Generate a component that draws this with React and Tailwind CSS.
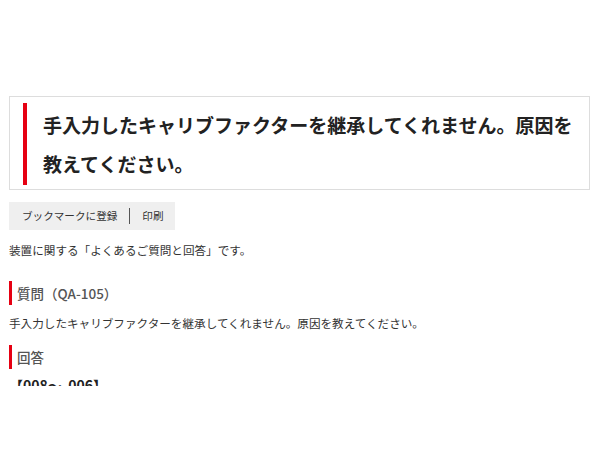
export default function App() {
  return (
    <div
      className="h-[475px] w-[600px] bg-white"
      style={{ fontFamily: '"Noto Sans CJK JP", "Noto Sans", sans-serif' }}
    >
      <div className="h-[386px] overflow-hidden pt-[96px] pl-[9px] pr-[10px] text-[#333]">
        <div className="border border-[#ddd] pt-[6px] pb-[4px] pl-[13px] pr-[6px]">
          <h1 className="border-l-[4px] border-[#e60012] py-[2px] pl-[16px] text-[19px] font-bold leading-[39px] text-[#222]">
            手入力したキャリブファクターを継承してくれません。原因を教えてください。
          </h1>
        </div>

        <div className="mt-[12px] flex h-[28px] w-[166px] items-center bg-[#efefef] pl-[13px] text-[10.6px] text-[#333]">
          <span>ブックマークに登録</span>
          <span className="mx-[12px] h-[16px] w-px bg-[#555]"></span>
          <span>印刷</span>
        </div>

        <p className="mt-[10px] text-[11.6px] leading-[20px]">
          装置に関する「よくあるご質問と回答」です。
        </p>

        <Midashi titulo="質問（QA-105）" className="mt-[21px]" />

        <p className="mt-[8px] text-[11.6px] leading-[20px]">
          手入力したキャリブファクターを継承してくれません。原因を教えてください。
        </p>

        <Midashi titulo="回答" className="mt-[12px]" />

        <p className="mt-[6px] text-[14px] font-bold leading-[20px] text-[#222]">
          【008～&nbsp;&nbsp;006】
        </p>
      </div>
    </div>
  );
}

function Midashi({ titulo, className }) {
  return (
    <h2
      className={
        "border-l-[3px] border-[#e60012] pl-[5px] text-[13.5px] font-medium leading-[24px] text-[#555] " +
        className
      }
    >
      {titulo}
    </h2>
  );
}
